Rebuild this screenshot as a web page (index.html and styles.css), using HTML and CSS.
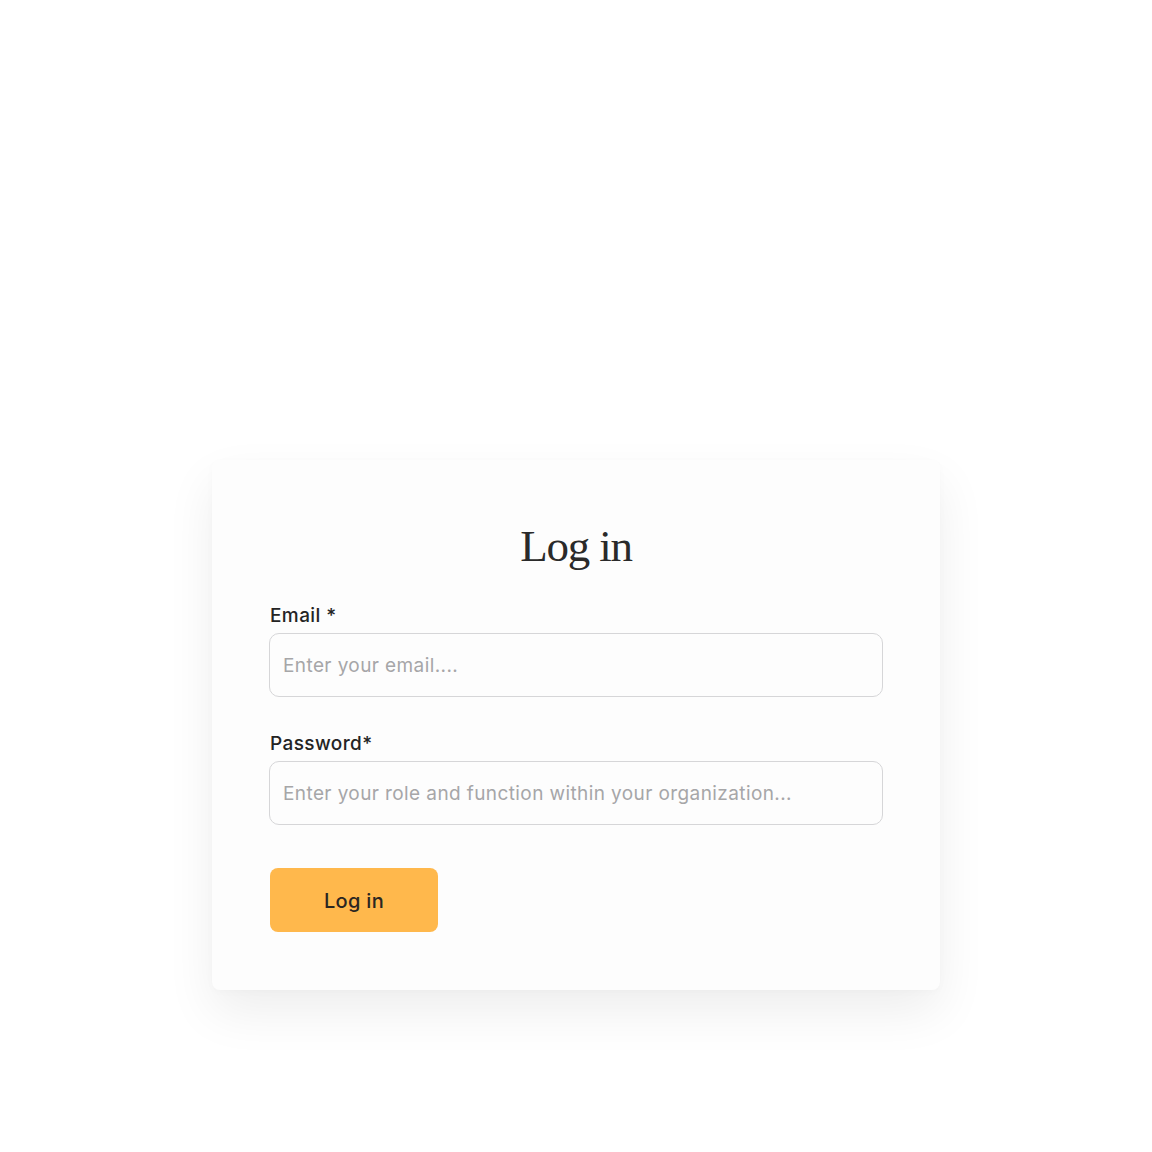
FILE: index.html
```html
<!DOCTYPE html>
<html lang="en">
<head>
<meta charset="utf-8">
<title>Log in</title>
<link rel="stylesheet" href="styles.css">
</head>
<body>
<main class="page">
  <form class="card" onsubmit="return false">
    <h1 class="title">Log in</h1>
    <div class="field">
      <label class="label" for="email">Email *</label>
      <input class="input" id="email" type="text" placeholder="Enter your email....">
    </div>
    <div class="field">
      <label class="label" for="password">Password*</label>
      <input class="input" id="password" type="text" placeholder="Enter your role and function within your organization...">
    </div>
    <button class="btn" type="submit">Log in</button>
  </form>
</main>
</body>
</html>
```
FILE: styles.css
```css
html, body {
  margin: 0;
  padding: 0;
  background: #ffffff;
}
body {
  font-family: Inter, "Liberation Sans", sans-serif;
  color: #222222;
}
.page {
  display: flex;
  justify-content: center;
  padding-top: 460px;
  padding-bottom: 160px;
}
.card {
  width: 728px;
  box-sizing: border-box;
  padding: 58px 57px 58px 57px;
  background: #fdfdfd;
  border-radius: 8px;
  box-shadow: 0 22px 50px rgba(0, 0, 0, 0.07), 0 2px 8px rgba(0, 0, 0, 0.02);
  display: flex;
  flex-direction: column;
}
.title {
  margin: 0 0 30px 0;
  font-family: "Liberation Serif", serif;
  font-weight: 400;
  font-size: 45px;
  line-height: 56px;
  letter-spacing: -1.2px;
  text-align: center;
  color: #2a2a2a;
}
.field {
  display: flex;
  flex-direction: column;
  gap: 5px;
  margin-bottom: 35px;
}
.field + .field {
  margin-bottom: 43px;
}
.label {
  font-size: 19px;
  line-height: 24px;
  font-weight: 500;
  letter-spacing: 0.4px;
  color: #242424;
  padding-left: 1px;
}
.input {
  height: 64px;
  box-sizing: border-box;
  border: 1.5px solid #d6d6d8;
  border-radius: 10px;
  background: #fdfdfd;
  padding: 0 13px;
  font-family: Inter, "Liberation Sans", sans-serif;
  font-size: 19px;
  letter-spacing: 0.4px;
  color: #222;
  outline: none;
}
.input::placeholder {
  color: #a6a6a8;
}
.btn {
  align-self: flex-start;
  width: 168px;
  height: 64px;
  margin-left: 1px;
  padding: 2px 0 0 0;
  border: none;
  border-radius: 8px;
  background: #ffb84c;
  font-family: Inter, "Liberation Sans", sans-serif;
  font-size: 20px;
  font-weight: 500;
  letter-spacing: 0.3px;
  color: #2a2622;
  cursor: pointer;
}
```
